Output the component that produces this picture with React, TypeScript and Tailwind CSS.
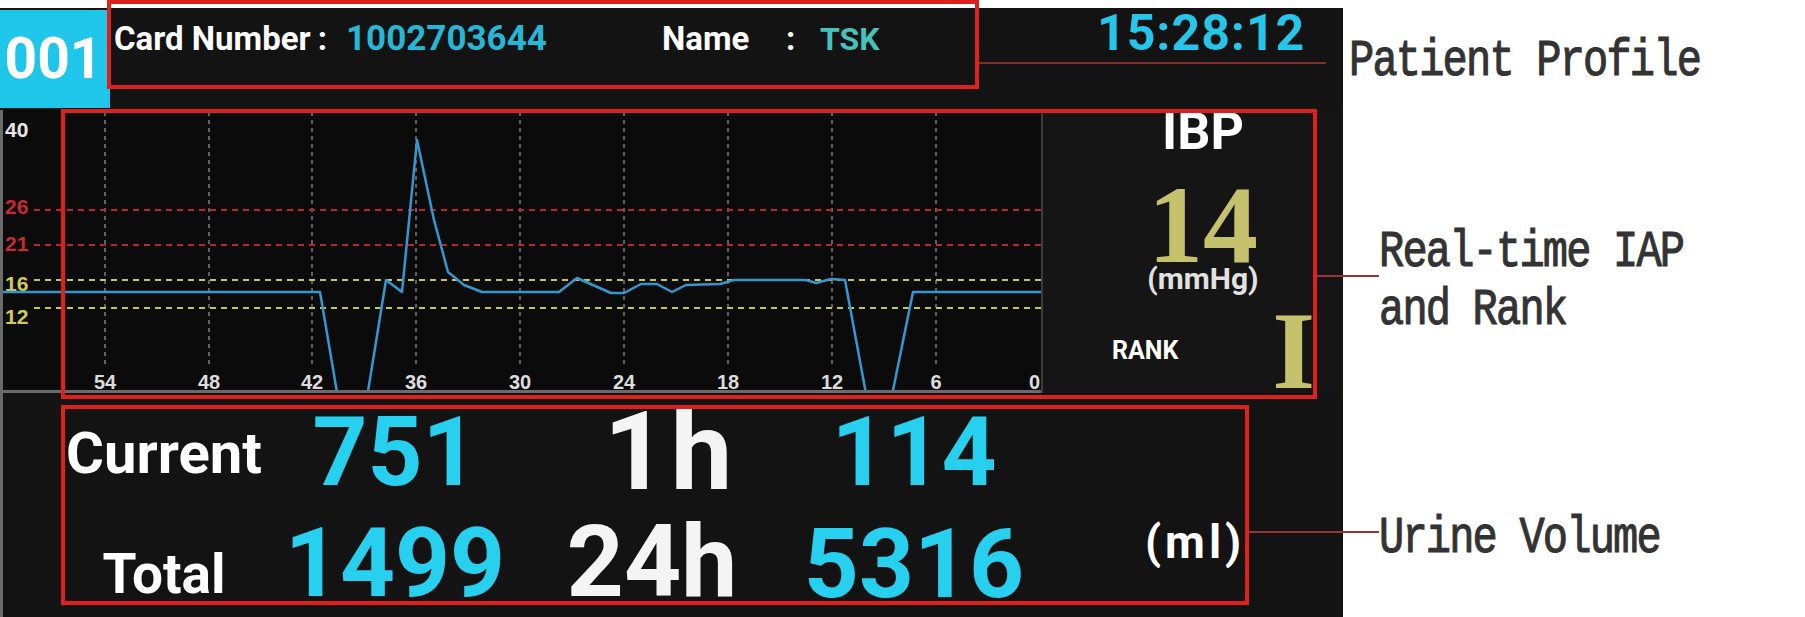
import React from "react";

const GRID_X = [105, 209, 312, 416, 520, 624, 728, 832, 936];
const XLABELS = ["54", "48", "42", "36", "30", "24", "18", "12", "6"];

const DATA =
  "0,182 320,182 340,300 365,300 386,170 402,182 417,30 434,110 448,162 464,175 482,182 559,182 577,168 611,183 624,183 641,174 657,174 672,182 686,175 720,174 734,170 806,170 816,173 831,169 845,170 869,300 889,300 913,182 1041,182";

function Chart() {
  const hLines = [
    { y: 100, c: "#b8262b" },
    { y: 135, c: "#b8262b" },
    { y: 170, c: "#c9c552" },
    { y: 198, c: "#c9c552" },
  ];
  const yLabels = [
    { t: "40", y: 27, c: "#e6e6e6" },
    { t: "26", y: 104, c: "#c42a2f" },
    { t: "21", y: 141, c: "#c42a2f" },
    { t: "16", y: 181, c: "#cfcb55" },
    { t: "12", y: 214, c: "#cfcb55" },
  ];
  return (
    <svg width={1038} height={283} viewBox="3 0 1038 283" className="block">
      <rect x={3} y={0} width={1038} height={283} fill="#0b0b0b" />
      {GRID_X.map((x) => (
        <line key={x} x1={x} y1={2} x2={x} y2={258} stroke="#7c7c7c" strokeWidth={1.5} strokeDasharray="4 4" />
      ))}
      {hLines.map((l) => (
        <line key={l.y} x1={34} y1={l.y} x2={1041} y2={l.y} stroke={l.c} strokeWidth={2} strokeDasharray="6 5" />
      ))}
      {yLabels.map((l) => (
        <text key={l.t} x={5} y={l.y} fill={l.c} fontSize={21} fontWeight={700} fontFamily="'Liberation Sans', Arial, sans-serif">
          {l.t}
        </text>
      ))}
      <polyline points={DATA} fill="none" stroke="#3597cf" strokeWidth={2.5} strokeLinejoin="round" />
      {GRID_X.map((x, i) => (
        <text key={"l" + x} x={x} y={279} fill="#dcdcdc" fontSize={20} fontWeight={700} textAnchor="middle" fontFamily="'Liberation Sans', Arial, sans-serif">
          {XLABELS[i]}
        </text>
      ))}
      <text x={1040} y={279} fill="#dcdcdc" fontSize={20} fontWeight={700} textAnchor="end" fontFamily="'Liberation Sans', Arial, sans-serif">
        0
      </text>
      <rect x={3} y={280} width={1038} height={3} fill="#6b6b6b" />
    </svg>
  );
}

export default function App() {
  return (
    <div className="relative w-[1805px] h-[617px] bg-white overflow-hidden flex font-['Roboto',sans-serif]">
      {/* Monitor screen */}
      <div className="mt-[8px] w-[1343px] h-[609px] bg-[#131313] flex flex-col shrink-0">
        {/* Header */}
        <div className="h-[102px] flex items-start">
          <div className="mt-[2px] w-[110px] h-[98px] bg-[#1fc6ea] text-white font-bold text-[57px] leading-none text-center pt-[20px] pr-[3px]">
            001
          </div>
          <div className="flex items-baseline">
            <span className="ml-[4px] w-[232px] flex items-baseline text-white font-bold text-[33px] leading-none">
              <span>Card Number</span>
              <span className="ml-[7px]">:</span>
            </span>
            <span className="w-[316px] text-[#27b7d6] font-bold text-[35px] leading-none">1002703644</span>
            <span className="w-[124px] text-white font-bold text-[33px] leading-none">Name</span>
            <span className="w-[34px] text-white font-bold text-[33px] leading-none">:</span>
            <span className="w-[277px] text-[#45c2bb] font-bold text-[32px] leading-none">TSK</span>
            <span className="text-[#26c6ea] font-bold text-[50px] leading-none tracking-[1px]">15:28:12</span>
          </div>
        </div>

        {/* Lower area with left gray edge */}
        <div className="flex-1 flex flex-col border-l-[3px] border-[#6b6b6b]">
          {/* Chart + IBP */}
          <div className="h-[283px] flex">
            <Chart />
            <div className="flex-1 h-full bg-[#151515] border-l-[2px] border-[#3c3c3c] pl-[20px] flex flex-col items-center">
              <div className="mt-[-4px] text-white font-bold text-[52px] leading-none">IBP</div>
              <div className="mt-[12px] text-[#c6c16c] font-bold text-[110px] leading-none font-['Liberation_Serif',serif]">
                14
              </div>
              <div className="mt-[-16px] text-[#e2e2e2] font-bold text-[30px] leading-none">(mmHg)</div>
              <div className="mt-[2px] w-full flex items-start">
                <div className="ml-[49px] mt-[42px] text-white font-bold text-[25px] leading-none">RANK</div>
                <div className="ml-[94px] text-[#c6c16c] font-bold text-[110px] leading-none font-['Liberation_Serif',serif]">
                  I
                </div>
              </div>
            </div>
          </div>

          {/* Urine volume */}
          <div className="flex-1 flex flex-col pl-[58px]">
            <div className="h-[120px] flex items-start">
              <div className="w-[206px] text-center mt-[31px] text-white font-bold text-[58px] leading-none">Current</div>
              <div className="w-[256px] text-center mt-[11px] text-[#27d0ef] font-bold text-[96px] leading-none">751</div>
              <div className="w-[294px] text-center mt-[4px] text-[#f4f4f4] font-bold text-[110px] leading-none tracking-[4px]">1h</div>
              <div className="w-[194px] text-center mt-[11px] text-[#27d0ef] font-bold text-[96px] leading-none">114</div>
            </div>
            <div className="flex items-start">
              <div className="w-[206px] text-center mt-[34px] text-white font-bold text-[55px] leading-none">Total</div>
              <div className="w-[256px] text-center mt-[2px] text-[#27d0ef] font-bold text-[96px] leading-none">1499</div>
              <div className="w-[258px] text-center mt-[-1px] text-[#f4f4f4] font-bold text-[100px] leading-none">24h</div>
              <div className="w-[266px] text-center mt-[3px] text-[#27d0ef] font-bold text-[96px] leading-none">5316</div>
              <div className="pl-[98px] mt-[6px] text-white font-bold text-[46px] leading-none tracking-[4px]">(ml)</div>
            </div>
          </div>
        </div>
      </div>

      {/* Annotation labels */}
      <div className="flex flex-col text-[#333333] font-normal text-[42px] leading-none tracking-[-1.8px] font-['Liberation_Mono',monospace] whitespace-nowrap [-webkit-text-stroke:0.9px_#333333]">
        <div className="ml-[6px] mt-[40px] h-[42px] scale-y-[1.25]">Patient Profile</div>
        <div className="ml-[36px] mt-[149px] h-[42px] scale-y-[1.25]">Real-time IAP</div>
        <div className="ml-[36px] mt-[16px] h-[42px] scale-y-[1.25]">and Rank</div>
        <div className="ml-[36px] mt-[186px] h-[42px] scale-y-[1.25]">Urine Volume</div>
      </div>

      {/* Red annotation boxes */}
      <div className="absolute left-[107px] top-0 w-[872px] h-[89px] border-[4px] border-[#df201d]" />
      <div className="absolute left-[61px] top-[109px] w-[1256px] h-[290px] border-[4px] border-[#df201d]" />
      <div className="absolute left-[61px] top-[405px] w-[1188px] h-[200px] border-[4px] border-[#df201d]" />

      {/* Leader lines */}
      <div className="absolute left-[979px] top-[62px] w-[347px] h-[2px] bg-[#8c2a2a]" />
      <div className="absolute left-[1317px] top-[275px] w-[62px] h-[2px] bg-[#9a3434]" />
      <div className="absolute left-[1249px] top-[531px] w-[130px] h-[2px] bg-[#9a3434]" />
    </div>
  );
}
